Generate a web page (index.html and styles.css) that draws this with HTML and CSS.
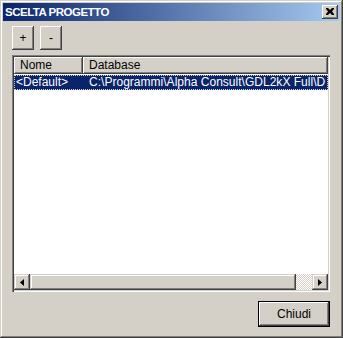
FILE: index.html
```html
<!DOCTYPE html>
<html>
<head>
<meta charset="utf-8">
<link rel="stylesheet" href="styles.css">
</head>
<body>
<div class="window">
  <div class="titlebar">
    <span class="title">SCELTA PROGETTO</span>
    <div class="close"><svg width="8" height="7" viewBox="0 0 8 7"><path d="M0 0h2l2 2 2-2h2v1L6 3.5 8 6v1H6L4 5 2 7H0V6l2-2.5L0 1z" fill="#000"/></svg></div>
  </div>
  <div class="toolbar">
    <div class="btn small">+</div>
    <div class="btn small">-</div>
  </div>
  <div class="list">
    <div class="header">
      <div class="col c1">Nome</div>
      <div class="col c2">Database</div>
    </div>
    <div class="rows">
      <div class="row sel"><span class="cell c1">&lt;Default&gt;</span><span class="cell c2">C:\Programmi\Alpha Consult\GDL2kX Full\D</span></div>
    </div>
    <div class="hscroll">
      <div class="arrow"><svg width="4" height="7" viewBox="0 0 4 7"><path d="M4 0v7L0 3.5z" fill="#000"/></svg></div>
      <div class="thumb"></div>
      <div class="track"></div>
      <div class="arrow"><svg width="4" height="7" viewBox="0 0 4 7"><path d="M0 0v7l4-3.5z" fill="#000"/></svg></div>
    </div>
  </div>
  <div class="footer">
    <div class="btn chiudi">Chiudi</div>
  </div>
</div>
</body>
</html>
```
FILE: styles.css
```css
html, body {
  margin: 0;
  padding: 0;
  background: #d4d0c8;
}
.window {
  width: 343px;
  height: 338px;
  box-sizing: border-box;
  background: #d4d0c8;
  box-shadow: inset -1px -1px 0 #404040, inset 1px 1px 0 #d4d0c8, inset -2px -2px 0 #808080, inset 2px 2px 0 #ffffff;
  padding: 3px;
  display: flex;
  flex-direction: column;
  font-family: "Liberation Sans", Arial, sans-serif;
  font-size: 12px;
  color: #000;
}
.titlebar {
  height: 18px;
  background: linear-gradient(to right, #0a246a, #a6caf0);
  display: flex;
  align-items: center;
  padding: 0 2px 0 2px;
}
.title {
  color: #fff;
  font-weight: bold;
  font-size: 11.5px;
  font-family: "Liberation Sans", Arial, sans-serif;
  flex: 1;
  letter-spacing: -0.5px;
}
.close {
  width: 16px;
  height: 14px;
  box-sizing: border-box;
  background: #d4d0c8;
  box-shadow: inset -1px -1px 0 #404040, inset 1px 1px 0 #ffffff, inset -2px -2px 0 #808080;
  display: flex;
  align-items: center;
  justify-content: center;
  padding: 0 1px 1px 0;
}
.btn {
  background: #d4d0c8;
  box-sizing: border-box;
  box-shadow: inset -1px -1px 0 #404040, inset 1px 1px 0 #ffffff, inset -2px -2px 0 #808080, inset 2px 2px 0 #d4d0c8;
  display: flex;
  align-items: center;
  justify-content: center;
}
.toolbar {
  display: flex;
  gap: 6px;
  padding: 5px 0 0 9px;
  height: 29px;
  box-sizing: border-box;
}
.btn.small {
  width: 22px;
  height: 24px;
  font-size: 12px;
}
.list {
  margin: 5px 0 0 9px;
  width: 318px;
  height: 237px;
  box-sizing: border-box;
  background: #fff;
  box-shadow: inset 1px 1px 0 #808080, inset 2px 2px 0 #404040, inset -1px -1px 0 #ffffff, inset -2px -2px 0 #d4d0c8;
  padding: 2px;
  display: flex;
  flex-direction: column;
}
.header {
  display: flex;
  height: 17px;
}
.col {
  box-sizing: border-box;
  background: #d4d0c8;
  box-shadow: inset -1px -1px 0 #404040, inset 1px 1px 0 #ffffff, inset -2px -2px 0 #808080;
  padding: 2px 0 0 6px;
  height: 17px;
  line-height: 13px;
}
.col.c1 { width: 69px; }
.col.c2 { flex: 1; }
.rows {
  flex: 1;
  padding-top: 1px;
  overflow: hidden;
}
.row {
  display: flex;
  height: 15px;
  line-height: 15px;
  white-space: nowrap;
}
.row.sel {
  background: #0a246a;
  color: #fff;
  outline: 1px dotted #d4d0c8;
  outline-offset: -1px;
}
.cell.c1 { width: 73px; padding-left: 2px; box-sizing: border-box; flex: none; }
.cell.c2 { padding-left: 2px; letter-spacing: 0.02px; }
.hscroll {
  display: flex;
  height: 16px;
}
.arrow {
  width: 16px;
  height: 16px;
  box-sizing: border-box;
  background: #d4d0c8;
  box-shadow: inset -1px -1px 0 #404040, inset 1px 1px 0 #d4d0c8, inset -2px -2px 0 #808080, inset 2px 2px 0 #ffffff;
  display: flex;
  align-items: center;
  justify-content: center;
}
.thumb {
  width: 266px;
  height: 16px;
  box-sizing: border-box;
  background: #d4d0c8;
  box-shadow: inset -1px -1px 0 #404040, inset 1px 1px 0 #d4d0c8, inset -2px -2px 0 #808080, inset 2px 2px 0 #ffffff;
}
.track {
  flex: 1;
  background-color: #ffffff;
  background-image: repeating-conic-gradient(#d4d0c8 0 25%, #ffffff 0 50%);
  background-size: 2px 2px;
}
.footer {
  display: flex;
  justify-content: flex-end;
  padding: 9px 10px 0 0;
}
.btn.chiudi {
  width: 72px;
  height: 26px;
  box-shadow: inset 0 0 0 1px #000, inset -2px -2px 0 #404040, inset 2px 2px 0 #ffffff, inset -3px -3px 0 #808080;
  font-size: 12px;
}
```
